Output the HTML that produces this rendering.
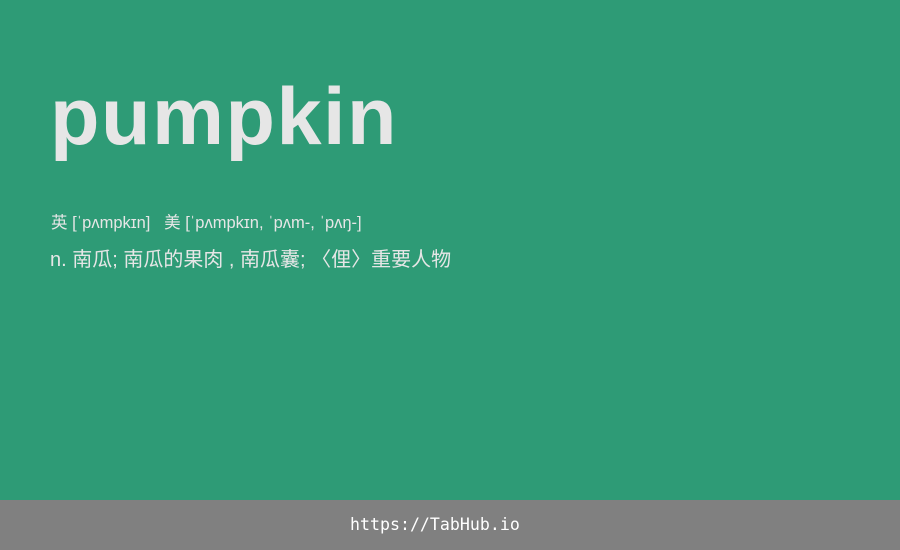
<!DOCTYPE html>
<html><head><meta charset="utf-8"><style>
html,body{margin:0;padding:0}
body{width:900px;height:550px;background:#2e9b76;position:relative;overflow:hidden;font-family:"Liberation Sans","Noto Sans CJK SC",sans-serif;color:#e6e6e6}
.w{position:absolute;left:50px;top:71px;font-size:81px;font-weight:bold;letter-spacing:1.5px;line-height:92px;color:#e6e6e6}
.ph{position:absolute;left:51px;top:212px;font-size:16.5px;line-height:22px;white-space:pre}
.df{position:absolute;left:50px;top:246px;font-size:20px;line-height:28px;white-space:pre}
.ft{position:absolute;left:0;top:500px;width:900px;height:50px;background:#808080}
.ft span{position:absolute;left:350px;top:0;color:#fff;font-family:"DejaVu Sans Mono",monospace;font-size:16.6px;line-height:50px}
</style></head><body>
<div class="w">pumpkin</div>
<div class="ph">英 [ˈpʌmpkɪn]   美 [ˈpʌmpkɪn, ˈpʌm-, ˈpʌŋ-]</div>
<div class="df">n. 南瓜; 南瓜的果肉 , 南瓜囊; 〈俚〉重要人物</div>
<div class="ft"><span>https://TabHub.io</span></div>
</body></html>
